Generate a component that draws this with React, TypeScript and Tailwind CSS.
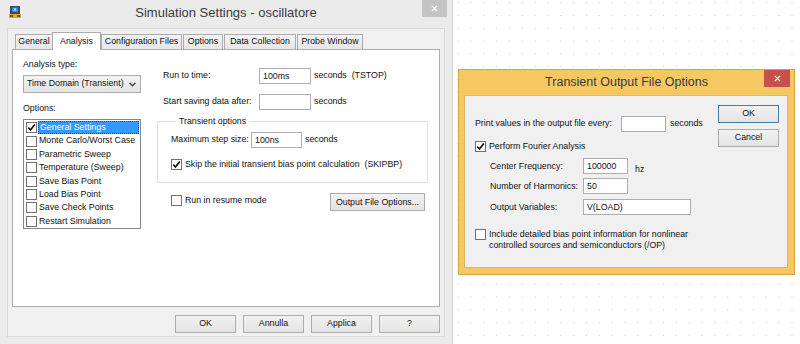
import React from 'react';

/**
 * Two classic Windows 8 dialogs (PSpice-style) sitting on a dotted schematic canvas.
 * Left: "Simulation Settings" with the Analysis tab open.
 * Right: "Transient Output File Options" popup with the golden active frame.
 */

function Check({ checked = false }: { checked?: boolean }) {
  return (
    <span className="flex h-[11px] w-[11px] shrink-0 items-center justify-center border border-[#707070] bg-white">
      {checked && (
        <svg viewBox="0 0 9 9" className="h-[9px] w-[9px]" aria-hidden="true">
          <path d="M1.3 4.6 L3.5 7 L7.8 1.5" fill="none" stroke="#111" strokeWidth="1.7" />
        </svg>
      )}
    </span>
  );
}

function TextBox({ value = '', w }: { value?: string; w: string }) {
  return (
    <div className={`h-[16px] shrink-0 border border-[#abadb3] bg-white px-[3px] leading-[14px] ${w}`}>
      {value}
    </div>
  );
}

function WinButton({ label, w, primary = false }: { label: string; w: string; primary?: boolean }) {
  return (
    <div
      className={`flex h-[18px] shrink-0 items-center justify-center border bg-linear-to-b from-[#f2f2f2] to-[#e3e3e3] ${w} ${
        primary ? 'border-[#3c7fb1]' : 'border-[#acacac]'
      }`}
    >
      {label}
    </div>
  );
}

const TABS = [
  { label: 'General', w: 'w-[38px]' },
  { label: 'Analysis', w: 'w-[49px]', active: true },
  { label: 'Configuration Files', w: 'w-[81px]' },
  { label: 'Options', w: 'w-[40px]' },
  { label: 'Data Collection', w: 'w-[72px]' },
  { label: 'Probe Window', w: 'w-[66px]' },
];

const OPTIONS = [
  'General Settings',
  'Monte Carlo/Worst Case',
  'Parametric Sweep',
  'Temperature (Sweep)',
  'Save Bias Point',
  'Load Bias Point',
  'Save Check Points',
  'Restart Simulation',
];

function AppIcon() {
  return (
    <svg viewBox="0 0 14 14" className="h-[14px] w-[14px]" aria-hidden="true">
      <rect x="2" y="1" width="10" height="8" fill="#3a4a5c" />
      <rect x="4" y="2.5" width="6" height="4.5" fill="#3b8fe0" />
      <rect x="6" y="3.5" width="2" height="2" fill="#cfe6ff" />
      <rect x="1" y="9" width="12" height="4" fill="#d9a735" />
      <rect x="2" y="10" width="3" height="2" fill="#6b5520" />
      <rect x="9" y="10" width="3" height="2" fill="#6b5520" />
    </svg>
  );
}

function SimulationSettings() {
  return (
    <div className="absolute left-0 top-0 flex h-[344px] w-[453px] flex-col border-r border-[#d2d2d2] bg-[#ebebeb]">
      {/* title bar */}
      <div className="relative flex h-[28px] shrink-0 items-center justify-center pb-[2px] text-[13px] text-[#3b3b3b]">
        <div className="absolute left-[8px] top-[5px]">
          <AppIcon />
        </div>
        Simulation Settings - oscillatore
        <div className="absolute left-[422px] top-0 flex h-[17px] w-[25px] items-center justify-center bg-[#c4c4c4]">
          <svg viewBox="0 0 8 8" className="h-[7px] w-[7px]" aria-hidden="true">
            <path d="M1 1 L7 7 M7 1 L1 7" stroke="#fff" strokeWidth="1.6" />
          </svg>
        </div>
      </div>

      {/* client */}
      <div className="mx-[7px] mb-[7px] flex flex-1 flex-col border border-[#dadada] bg-[#f0f0f0] pl-[4px] text-[8.8px] text-[#111]">
        {/* tabs */}
        <div className="relative z-10 ml-[3px] mt-[2px] flex h-[18px] items-end">
          {TABS.map((t, i) =>
            t.active ? (
              <div
                key={t.label}
                className={`-mb-px -ml-px flex h-[18px] items-start justify-center border border-b-0 border-[#acacac] bg-white pt-[2px] ${t.w}`}
              >
                {t.label}
              </div>
            ) : (
              <div
                key={t.label}
                className={`flex h-[15px] items-center justify-center border border-b-0 border-[#acacac] bg-linear-to-b from-[#f3f3f3] to-[#e6e6e6] ${t.w} ${
                  i > 2 ? 'ml-px' : ''
                }`}
              >
                {t.label}
              </div>
            ),
          )}
        </div>

        {/* tab page */}
        <div className="flex h-[258px] w-[428px] border border-[#adadad] bg-white">
          {/* left column */}
          <div className="ml-[10px] flex w-[118px] flex-col">
            <div className="mt-[9px] leading-[11px]">Analysis type:</div>
            <div className="mt-[5px] flex h-[18px] items-center justify-between border border-[#acacac] bg-linear-to-b from-[#f3f3f3] to-[#e5e5e5] pl-[3px] pr-[4px]">
              <span>Time Domain (Transient)</span>
              <svg viewBox="0 0 7 5" className="h-[5px] w-[7px]" aria-hidden="true">
                <path d="M0.6 0.8 L3.5 3.8 L6.4 0.8" fill="none" stroke="#444" strokeWidth="1.3" />
              </svg>
            </div>
            <div className="mt-[10px] leading-[11px]">Options:</div>
            <div className="mt-[5px] flex h-[110px] flex-col border border-[#828790] bg-white px-px pt-px">
              {OPTIONS.map((o, i) => (
                <div key={o} className="flex h-[13.4px] items-center">
                  <span className="ml-px mr-px">
                    <Check checked={i === 0} />
                  </span>
                  <span
                    className={`flex h-full flex-1 items-center pl-[1px] ${
                      i === 0 ? 'border border-dotted border-[#1a4f8f] bg-[#3399ff] text-white' : ''
                    }`}
                  >
                    {o}
                  </span>
                </div>
              ))}
            </div>
          </div>

          {/* right column */}
          <div className="ml-[16px] flex w-[271px] flex-col pt-[18px]">
            <div className="flex h-[16px] items-center pl-[6px]">
              <span className="w-[96px]">Run to time:</span>
              <TextBox value="100ms" w="w-[52px]" />
              <span className="ml-[3px]">seconds&nbsp;&nbsp;(TSTOP)</span>
            </div>
            <div className="mt-[10px] flex h-[16px] items-center pl-[6px]">
              <span className="w-[96px]">Start saving data after:</span>
              <TextBox w="w-[52px]" />
              <span className="ml-[3px]">seconds</span>
            </div>

            <fieldset className="mt-[6px] rounded-[2px] border border-[#dcdcdc] pb-[11px] pl-[13px]">
              <legend className="ml-[5px] px-[3px] leading-[11px]">Transient options</legend>
              <div className="mt-[5px] flex h-[16px] items-center">
                <span className="w-[80px]">Maximum step size:</span>
                <TextBox value="100ns" w="w-[51px]" />
                <span className="ml-[3px]">seconds</span>
              </div>
              <div className="mt-[10px] flex items-center">
                <Check checked />
                <span className="ml-[3px]">Skip the initial transient bias point calculation&nbsp;&nbsp;(SKIPBP)</span>
              </div>
            </fieldset>

            <div className="mt-[10px] flex items-start pl-[14px] pr-[3px]">
              <div className="mt-px flex items-center">
                <Check />
                <span className="ml-[3px]">Run in resume mode</span>
              </div>
              <div className="ml-auto">
                <WinButton label="Output File Options..." w="w-[95px]" />
              </div>
            </div>
          </div>
        </div>

        {/* dialog buttons */}
        <div className="mt-[8px] flex w-[428px] justify-end gap-[7px]">
          <WinButton label="OK" w="w-[61px]" />
          <WinButton label="Annulla" w="w-[61px]" />
          <WinButton label="Applica" w="w-[61px]" />
          <WinButton label="?" w="w-[61px]" />
        </div>
      </div>
    </div>
  );
}

function TransientOutputOptions() {
  return (
    <div className="absolute left-[458px] top-[69px] flex h-[206px] w-[337px] flex-col border border-[#d6a63f] bg-[#f5c862]">
      <div className="relative flex h-[25px] shrink-0 items-center justify-center text-[12.5px] text-[#3a3a3a]">
        Transient Output File Options
        <div className="absolute left-[305px] top-0 flex h-[17px] w-[26px] items-center justify-center bg-[#c7504c]">
          <svg viewBox="0 0 8 8" className="h-[7px] w-[7px]" aria-hidden="true">
            <path d="M1 1 L7 7 M7 1 L1 7" stroke="#fff" strokeWidth="1.6" />
          </svg>
        </div>
      </div>

      <div className="mb-[6px] ml-[5px] mr-[6px] flex flex-1 border border-[#dcb866] bg-[#f0f0f0] text-[8.8px] text-[#111]">
        <div className="flex flex-1 flex-col pl-[10px] pt-[20px]">
          <div className="flex h-[16px] items-center">
            <span className="w-[146px]">Print values in the output file every:</span>
            <TextBox w="w-[45px]" />
            <span className="ml-[4px]">seconds</span>
          </div>
          <div className="mt-[8px] flex items-center">
            <Check checked />
            <span className="ml-[3px]">Perform Fourier Analysis</span>
          </div>
          <div className="mt-[5px] flex h-[16px] items-center pl-[15px]">
            <span className="w-[93px]">Center Frequency:</span>
            <TextBox value="100000" w="w-[45px]" />
            <span className="ml-[7px] mt-[7px]">hz</span>
          </div>
          <div className="mt-[4px] flex h-[16px] items-center pl-[15px]">
            <span className="w-[93px]">Number of Harmonics:</span>
            <TextBox value="50" w="w-[45px]" />
          </div>
          <div className="mt-[5px] flex h-[16px] items-center pl-[15px]">
            <span className="w-[93px]">Output Variables:</span>
            <TextBox value="V(LOAD)" w="w-[108px]" />
          </div>
          <div className="mt-[14px] flex items-start">
            <Check />
            <span className="ml-[3px] leading-[10.5px]">
              Include detailed bias point information for nonlinear
              <br />
              controlled sources and semiconductors (/OP)
            </span>
          </div>
        </div>
        <div className="flex flex-col gap-[6px] pr-[8px] pt-[9px]">
          <WinButton label="OK" w="w-[61px]" primary />
          <WinButton label="Cancel" w="w-[61px]" />
        </div>
      </div>
    </div>
  );
}

export default function App() {
  return (
    <div className="relative h-[344px] w-[800px] overflow-hidden bg-white bg-[radial-gradient(circle,#cbcbcb_0.6px,transparent_1px)] bg-[length:12.85px_12.8px] bg-[position:2.1px_-3.7px] font-['Liberation_Sans',Arial,sans-serif]">
      <SimulationSettings />
      <TransientOutputOptions />
    </div>
  );
}
